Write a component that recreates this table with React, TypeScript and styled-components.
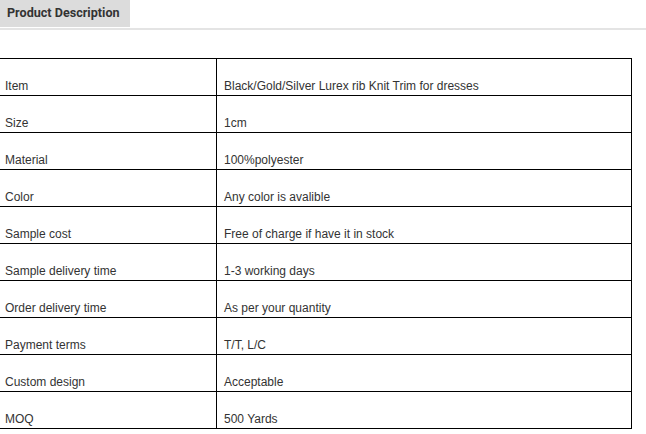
import styled, { createGlobalStyle } from 'styled-components';

const GlobalStyle = createGlobalStyle`
  body {
    margin: 0;
    background: #fff;
    font-family: "Liberation Sans", Arial, sans-serif;
  }
`;

const TabBar = styled.div`
  height: 28px;
  border-bottom: 2px solid #e4e4e4;
`;

const Tab = styled.div`
  display: inline-block;
  width: 123px;
  height: 27px;
  padding-left: 7px;
  background-color: #dcdcdc;
  color: #333;
  font-family: Roboto, "Liberation Sans", sans-serif;
  font-weight: bold;
  font-size: 12.6px;
  line-height: 25px;
`;

const SpecTable = styled.table`
  margin: 28px 0 0 -1px;
  width: 633px;
  border-collapse: collapse;
`;

const Cell = styled.td<{ $wide?: boolean }>`
  width: ${p => (p.$wide ? 'auto' : '211px')};
  height: 34px;
  padding: 0 0 2px ${p => (p.$wide ? '7px' : '5px')};
  border: 1px solid #000;
  vertical-align: bottom;
  color: #333;
  font-size: 12px;
  line-height: 14px;
`;

const rows = [
  ['Item', 'Black/Gold/Silver Lurex rib Knit Trim for dresses'],
  ['Size', '1cm'],
  ['Material', '100%polyester'],
  ['Color', 'Any color is avalible'],
  ['Sample cost', 'Free of charge if have it in stock'],
  ['Sample delivery time', '1-3 working days'],
  ['Order delivery time', 'As per your quantity'],
  ['Payment terms', 'T/T, L/C'],
  ['Custom design', 'Acceptable'],
  ['MOQ', '500 Yards'],
];

export default function App() {
  return (
    <>
      <GlobalStyle />
      <TabBar>
        <Tab>Product Description</Tab>
      </TabBar>
      <SpecTable>
        <tbody>
          {rows.map(([name, value]) => (
            <tr key={name}>
              <Cell>{name}</Cell>
              <Cell $wide>{value}</Cell>
            </tr>
          ))}
        </tbody>
      </SpecTable>
    </>
  );
}
